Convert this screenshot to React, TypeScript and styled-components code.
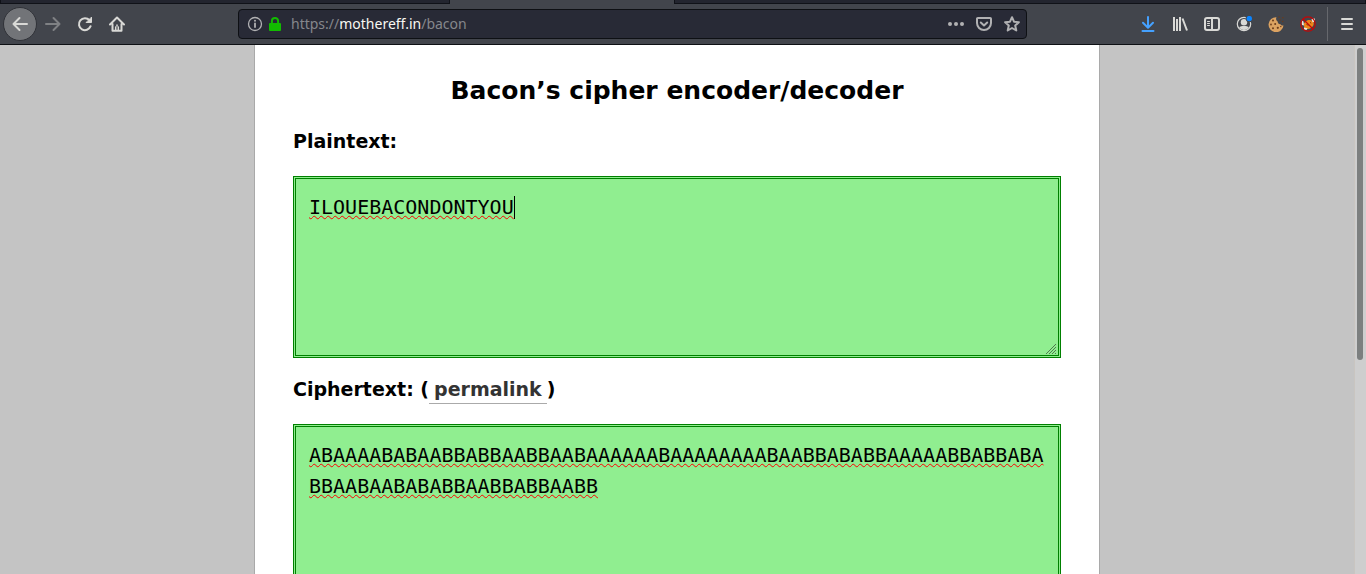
import React, { useState } from "react";
import styled, { createGlobalStyle } from "styled-components";

const GlobalStyle = createGlobalStyle`
  *, *::before, *::after { box-sizing: border-box; }
  body { margin: 0; background: #c4c4c4; }
`;

const Browser = styled.div`
  display: flex;
  flex-direction: column;
  height: 100vh;
  overflow: hidden;
`;

const TabStrip = styled.div`
  display: grid;
  grid-template-columns: 450px 224px 1fr;
  height: 4px;
  flex: none;
  background: #42454c;
`;

const InactiveTabs = styled.div`
  background: #23252f;
  border: 0 solid #101218;
  border-width: 0 1px 1px;
`;

const Toolbar = styled.header`
  display: flex;
  align-items: center;
  flex: none;
  height: 41px;
  padding: 0 3px;
  background: #42454c;
  border-bottom: 1px solid #0e1014;
`;

const ToolButton = styled.button<{ $round?: boolean }>`
  display: flex;
  align-items: center;
  justify-content: center;
  flex: none;
  width: ${(p) => (p.$round ? "34px" : "32px")};
  height: ${(p) => (p.$round ? "34px" : "32px")};
  padding: 0;
  border: ${(p) => (p.$round ? "1px solid #303238" : "0")};
  border-radius: 50%;
  background: ${(p) => (p.$round ? "#727478" : "transparent")};
  color: #d9d9d6;

  &:disabled { color: #7f8184; }
`;

const AddressBar = styled.div`
  display: flex;
  align-items: center;
  flex: 1;
  height: 30px;
  margin: 0 105px;
  padding: 0 6px 0 8px;
  gap: 4px;
  border: 1px solid #0e1014;
  border-radius: 4px;
  background: #282a36;
  color: #b1b1b3;
`;

const Address = styled.a`
  flex: 1;
  padding-left: 4px;
  font: 14px/20px "Noto Sans", sans-serif;
  color: #85878c;
  text-decoration: none;
`;

const Host = styled.span`
  color: #f8f8f2;
`;

const BarButton = styled.button`
  display: flex;
  padding: 0;
  margin-left: 8px;
  border: 0;
  background: none;
  color: inherit;
`;

const Separator = styled.div`
  width: 1px;
  height: 34px;
  margin: 0 3px;
  background: #66686d;
`;

const Viewport = styled.div`
  display: flex;
  flex: 1;
  min-height: 0;
`;

const Page = styled.main`
  flex: 1;
  overflow: hidden;
  font-family: "DejaVu Sans", sans-serif;
  color: #000;
`;

const Sheet = styled.article`
  max-width: 846px;
  min-height: 100%;
  margin: 0 auto;
  padding: 26px 38px;
  border: 0 solid #a9a9a9;
  border-width: 0 1px;
  background: #fff;
`;

const Title = styled.h1`
  margin: 0 0 15px;
  font-size: 25px;
  line-height: 40px;
  text-align: center;
`;

const FieldHeading = styled.h2`
  margin: 0 0 19px;
  font-size: 19px;
  line-height: 31px;
`;

const Permalink = styled.a`
  padding: 0 5px 3px;
  border-bottom: 1px solid #aaa;
  color: #333;
  text-decoration: none;
`;

const Field = styled.div`
  position: relative;
  display: flex;
  margin-bottom: 16px;
`;

const CipherArea = styled.textarea`
  width: 100%;
  height: 182px;
  padding: 13px;
  border: 3px double #008000;
  border-radius: 0;
  outline: none;
  resize: none;
  overflow: hidden;
  background: #90ee90;
  color: #000;
  font: 20px/31px "DejaVu Sans Mono", monospace;
  text-decoration: underline wavy #f00 1px;
  text-decoration-skip-ink: none;
`;

const Caret = styled.span<{ $column: number }>`
  position: absolute;
  top: 20px;
  left: calc(16px + ${(p) => p.$column}ch);
  width: 1px;
  height: 23px;
  background: #000;
  font: 20px/31px "DejaVu Sans Mono", monospace;
  pointer-events: none;
`;

const Grip = styled.svg`
  position: absolute;
  right: 3px;
  bottom: 3px;
  pointer-events: none;
`;

const ScrollTrack = styled.div`
  flex: none;
  width: 12px;
  padding: 3px 3px 0 2px;
  background: #cecece;
  border-left: 1px solid #c9c5c0;
`;

const ScrollThumb = styled.div`
  height: 312px;
  border-radius: 3px;
  background: #7c7f7f;
`;

function Icon({ children, size = 16 }: { children: React.ReactNode; size?: number }) {
  return (
    <svg
      width={size}
      height={size}
      viewBox="0 0 16 16"
      fill="none"
      stroke="currentColor"
      strokeWidth="2"
      strokeLinecap="round"
      strokeLinejoin="round"
      aria-hidden="true"
    >
      {children}
    </svg>
  );
}

const CIPHER =
  "ABAAAABABAABBABBAABBAABAAAAAABAAAAAAAABAABBABABBAAAAABBABBABABBAABAABABABBAABBABBAABB";

export default function App() {
  const [plain, setPlain] = useState("ILOUEBACONDONTYOU");
  const [cipher, setCipher] = useState(CIPHER);

  return (
    <Browser>
      <GlobalStyle />
      <TabStrip>
        <InactiveTabs />
        <span />
        <InactiveTabs />
      </TabStrip>
      <Toolbar>
        <ToolButton $round aria-label="Back">
          <Icon><path d="M15 8H1.500M7.500 2L1.500 8l6 6" /></Icon>
        </ToolButton>
        <ToolButton disabled aria-label="Forward">
          <Icon><path d="M1 8h13.500M8.500 2l6 6-6 6" /></Icon>
        </ToolButton>
        <ToolButton aria-label="Reload">
          <Icon>
            <path d="M12.500 4.200A6 6 0 1 0 13.600 10.200" />
            <path d="M14.500 1.500v5h-5z" fill="currentColor" strokeWidth="1" />
          </Icon>
        </ToolButton>
        <ToolButton aria-label="Home">
          <Icon>
            <path d="M1 8.500l7-7 7 7M3.500 8v6.800h9V8" />
            <path d="M8 9v1M6.700 14v-3M9.300 14v-3" strokeWidth="1.500" />
          </Icon>
        </ToolButton>

        <AddressBar>
          <Icon>
            <circle cx="8" cy="8" r="6.500" strokeWidth="1.300" />
            <path d="M8 7.500v3.500" strokeWidth="1.800" />
            <circle cx="8" cy="4.800" r="1" fill="currentColor" stroke="none" />
          </Icon>
          <svg width="16" height="16" viewBox="0 0 16 16" aria-hidden="true">
            <path d="M4.900 8V5a3.100 3.100 0 0 1 6.200 0v3" fill="none" stroke="#12bc00" strokeWidth="2" />
            <rect x="2" y="7" width="12" height="8" rx="1" fill="#12bc00" />
          </svg>
          <Address href="https://mothereff.in/bacon">
            https://<Host>mothereff.in</Host>/bacon
          </Address>
          <BarButton aria-label="Page actions">
            <Icon>
              <g fill="currentColor" stroke="none">
                <circle cx="2" cy="8" r="2" />
                <circle cx="8" cy="8" r="2" />
                <circle cx="14" cy="8" r="2" />
              </g>
            </Icon>
          </BarButton>
          <BarButton aria-label="Save to Pocket">
            <Icon>
              <path d="M1.800 2h12.400a.8.8 0 0 1 .8.8V7a7 7 0 0 1-14 0V2.800a.8.8 0 0 1 .8-.8z" />
              <path d="M4.800 6.500L8 9.500l3.200-3" />
            </Icon>
          </BarButton>
          <BarButton aria-label="Bookmark this page">
            <Icon>
              <path d="M8 1.200l2 4.500 4.900.5-3.700 3.300 1.100 5L8 12l-4.300 2.500 1.100-5L1.100 6.200 6 5.700z" />
            </Icon>
          </BarButton>
        </AddressBar>

        <ToolButton aria-label="Downloads">
          <svg width="16" height="16" viewBox="0 0 16 16" fill="none" stroke="#45a1ff" strokeWidth="2" strokeLinecap="round" strokeLinejoin="round">
            <path d="M8 1v10.500M3 6.700l5 5 5-5M2.500 15h11" />
          </svg>
        </ToolButton>
        <ToolButton aria-label="Library">
          <Icon>
            <path d="M2 1v14M5 3v12M8 1v14M10.500 2.500L15 14.500" strokeLinecap="butt" />
          </Icon>
        </ToolButton>
        <ToolButton aria-label="Sidebars">
          <Icon>
            <rect x="1" y="2" width="14" height="12" rx="2" />
            <path d="M8 2v12" />
            <path d="M3.500 5.500h2M3.500 7.500h2M3.500 9.500h2" strokeWidth="1" />
          </Icon>
        </ToolButton>
        <ToolButton aria-label="Account">
          <Icon>
            <circle cx="8" cy="8" r="6.700" strokeWidth="1.200" />
            <circle cx="8" cy="6.300" r="3.200" fill="currentColor" stroke="none" />
            <path d="M3.200 11.200c1.500-1.700 8.100-1.700 9.600 0a5.600 5.600 0 0 1-9.600 0z" fill="currentColor" stroke="none" />
            <circle cx="13.300" cy="2.600" r="3.600" fill="#42454c" stroke="none" />
            <circle cx="13.300" cy="2.600" r="2.700" fill="#0a84ff" stroke="none" />
          </Icon>
        </ToolButton>
        <ToolButton aria-label="Cookies">
          <svg width="16" height="16" viewBox="0 0 16 16">
            <path d="M8.500 1.200a7.500 7.500 0 1 0 7 8.300c-1.300.3-2.600-.2-3-1.300-1.600.2-2.900-.9-2.700-2.500C8.300 5 7.600 3 8.500 1.200z" fill="#dba261" />
            <g fill="#6b3c1b">
              <circle cx="5" cy="4.500" r="1" />
              <circle cx="3" cy="8.500" r=".9" />
              <circle cx="7.200" cy="8" r="1" />
              <circle cx="5" cy="12.300" r="1" />
              <circle cx="9.800" cy="11.800" r="1.100" />
              <circle cx="12.800" cy="10.500" r=".7" />
              <circle cx="11" cy="1" r=".8" />
              <circle cx="14.800" cy="1.800" r=".8" />
              <circle cx="12" cy="4" r=".8" />
              <circle cx="14.700" cy="5.500" r=".8" />
            </g>
          </svg>
        </ToolButton>
        <ToolButton aria-label="Proxy switcher">
          <svg width="16" height="16" viewBox="0 0 16 16">
            <path d="M4 7c1.500-.5 2-2.500 4.500-3 2-.4 3.500.3 5 2 .8 2.500-.3 4.500-2 5.500-1.800 1.500-5 2.500-7.500 1 .8-1.500-.5-3.500 0-5.500z" fill="#ee861b" />
            <path d="M1 4l2.500 1.500.5 4-2-.5zM11.500 3L15 2.500 14.500 6l-2 .3zM4 11.500l3.500.8L6.500 14 4 13.500z" fill="#eee6dc" />
            <path d="M6.500 8.500l2 .8M10 6.300l1.200 1" stroke="#7b3a0f" strokeWidth="1" />
            <circle cx="8" cy="8" r="7.200" fill="none" stroke="#c40606" strokeWidth="1.200" />
            <path d="M3 3l10 10" stroke="#c40606" strokeWidth="1.200" />
          </svg>
        </ToolButton>
        <Separator />
        <ToolButton aria-label="Open menu">
          <Icon><path d="M3 3h10M3 8h10M3 13h10" /></Icon>
        </ToolButton>
      </Toolbar>

      <Viewport>
        <Page>
          <Sheet>
            <Title>Bacon’s cipher encoder/decoder</Title>
            <FieldHeading>
              <label htmlFor="plaintext">Plaintext:</label>
            </FieldHeading>
            <Field>
              <CipherArea id="plaintext" value={plain} spellCheck={false} onChange={(e) => setPlain(e.target.value)} />
              <Caret $column={plain.length} />
              <Grip width="12" height="12" viewBox="0 0 12 12" stroke="#4f7a4f" strokeWidth="1" aria-hidden="true">
                <path d="M0 11L10 1M3 11l7-7M6 11l4-4M9 11l1-1" />
              </Grip>
            </Field>
            <FieldHeading>
              <label htmlFor="ciphertext">Ciphertext:</label> (<Permalink href="#ILOUEBACONDONTYOU">permalink</Permalink>)
            </FieldHeading>
            <Field>
              <CipherArea id="ciphertext" value={cipher} spellCheck={false} onChange={(e) => setCipher(e.target.value)} />
            </Field>
          </Sheet>
        </Page>
        <ScrollTrack>
          <ScrollThumb />
        </ScrollTrack>
      </Viewport>
    </Browser>
  );
}
